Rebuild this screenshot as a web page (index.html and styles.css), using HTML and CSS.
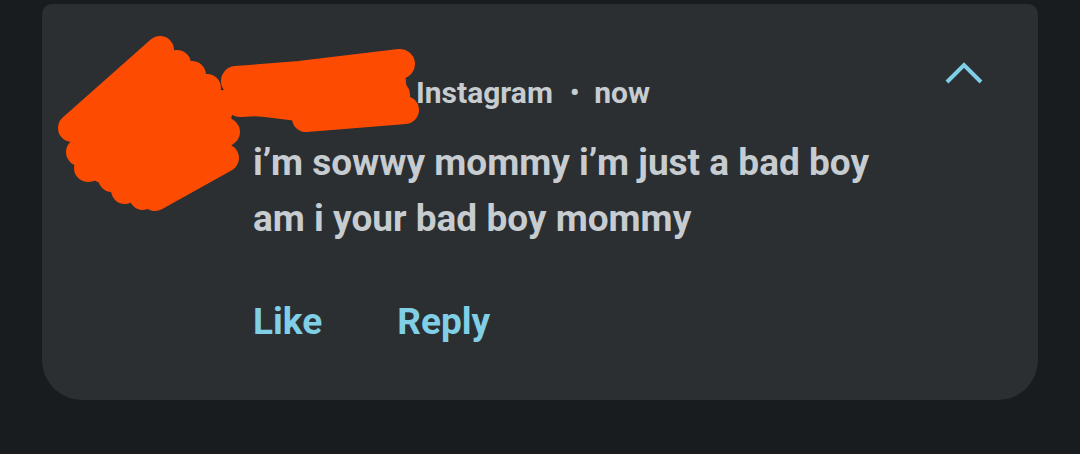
FILE: index.html
```html
<!DOCTYPE html>
<html lang="en">
<head>
<meta charset="utf-8">
<title>Notification</title>
<link rel="stylesheet" href="styles.css">
</head>
<body>
<div class="card">
  <div class="header">
    <span class="meta">Instagram<span class="dot">•</span>now</span>
    <svg class="chevron" width="40" height="24" viewBox="0 0 40 24"><polyline points="3,20 20,3 37,20" fill="none" stroke="#7fcfe6" stroke-width="4"/></svg>
  </div>
  <div class="message">
    <p>i’m sowwy mommy i’m just a bad boy</p>
    <p>am i your bad boy mommy</p>
  </div>
  <div class="actions">
    <span class="action">Like</span>
    <span class="action">Reply</span>
  </div>
  <svg class="redaction" width="460" height="240" viewBox="42 4 460 240">
    <g fill="none" stroke="#fd4c02" stroke-width="28" stroke-linecap="round" stroke-linejoin="round">
      <polygon fill="#fd4c02" stroke-width="8" points="160,50 72,128 85,172 145,198 226,160 228,100"/>
      <line x1="72" y1="128" x2="160" y2="50"/>
      <line x1="80" y1="152" x2="177" y2="64"/>
      <line x1="88" y1="168" x2="192" y2="75"/>
      <line x1="112" y1="178" x2="207" y2="88"/>
      <line x1="125" y1="190" x2="224" y2="104"/>
      <line x1="143" y1="196" x2="226" y2="132"/>
      <line x1="155" y1="197" x2="225" y2="158"/>
      <polyline stroke-width="30" points="236,81 300,76 400,64"/>
      <line stroke-width="30" x1="240" y1="102" x2="395" y2="95"/>
      <line stroke-width="28" x1="306" y1="118" x2="405" y2="110"/>
      <polygon fill="#fd4c02" stroke-width="8" points="236,81 400,64 405,110 306,118 240,110"/>
    </g>
  </svg>
</div>
</body>
</html>
```
FILE: styles.css
```css
html, body {
  margin: 0;
  padding: 0;
  background: #181c1f;
}
body {
  font-family: Roboto, "Noto Sans", sans-serif;
  font-weight: 700;
  width: 1080px;
  height: 454px;
  overflow: hidden;
}
.card {
  position: relative;
  box-sizing: border-box;
  margin: 4px 0 0 42px;
  width: 996px;
  height: 396px;
  background: #2b2f32;
  border-radius: 10px 10px 40px 40px;
  padding: 68px 54px 0 211px;
}
.header {
  display: flex;
  align-items: flex-start;
  height: 40px;
}
.meta {
  margin-left: 163px;
  font-size: 30px;
  line-height: 40px;
  color: #c6ccd0;
}
.dot {
  font-size: 26px;
  padding: 0 15px 0 17px;
  vertical-align: 2px;
}
.chevron {
  margin-left: auto;
  margin-top: -10px;
}
.message {
  margin-top: 23px;
  color: #c6ccd0;
  font-size: 37px;
  line-height: 56px;
}
.message p {
  margin: 0;
}
.actions {
  margin-top: 47px;
  display: flex;
  gap: 75px;
  font-size: 37px;
  line-height: 56px;
  color: #80cfe6;
}
.redaction {
  position: absolute;
  left: 0;
  top: 0;
}
```
